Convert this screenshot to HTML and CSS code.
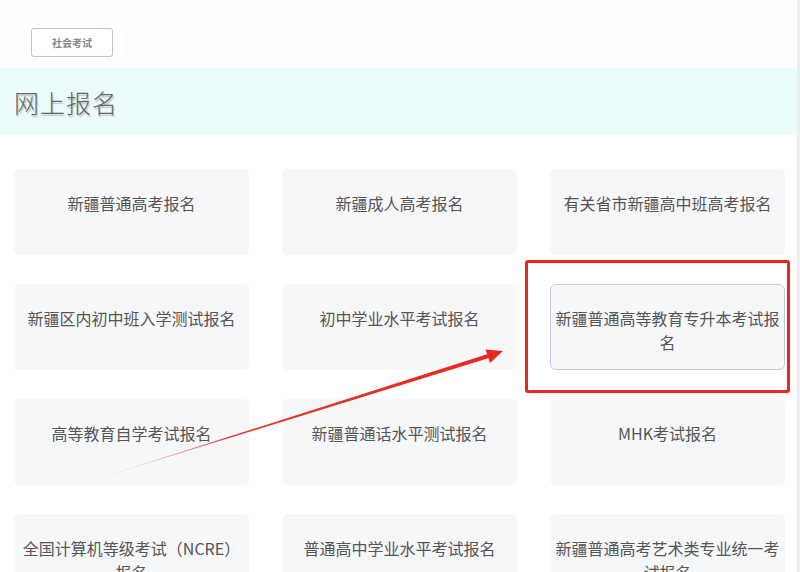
FILE: index.html
```html
<!DOCTYPE html>
<html lang="zh-CN">
<head>
    <meta charset="UTF-8">
    <meta name="viewport" content="width=device-width, initial-scale=1.0">
    <title>网上报名</title>
    <link rel="stylesheet" href="styles.css">
</head>
<body>
    <div class="page">
        <div class="top-bar">
            <button class="tab-btn">社会考试</button>
        </div>

        <div class="title-band">
            <h1 class="title">网上报名</h1>
        </div>

        <div class="exam-grid">
            <div class="exam-card">新疆普通高考报名</div>
            <div class="exam-card">新疆成人高考报名</div>
            <div class="exam-card">有关省市新疆高中班高考报名</div>
            <div class="exam-card">新疆区内初中班入学测试报名</div>
            <div class="exam-card">初中学业水平考试报名</div>
            <div class="exam-card active">新疆普通高等教育专升本考试报名</div>
            <div class="exam-card">高等教育自学考试报名</div>
            <div class="exam-card">新疆普通话水平测试报名</div>
            <div class="exam-card">MHK考试报名</div>
            <div class="exam-card">全国计算机等级考试（NCRE）报名</div>
            <div class="exam-card">普通高中学业水平考试报名</div>
            <div class="exam-card">新疆普通高考艺术类专业统一考试报名</div>
        </div>

        <!-- annotation drawn over the page -->
        <div class="mark-box"></div>
        <svg class="mark-arrow" width="800" height="572" viewBox="0 0 800 572">
            <defs>
                <linearGradient id="shaft" x1="90" y1="481" x2="490" y2="355" gradientUnits="userSpaceOnUse">
                    <stop offset="0" stop-color="#f4c8c8" stop-opacity="0.3"/>
                    <stop offset="0.35" stop-color="#e23a30"/>
                    <stop offset="1" stop-color="#e8281e"/>
                </linearGradient>
            </defs>
            <polygon points="90,481 489.4,353.6 490.6,357.4" fill="url(#shaft)"/>
            <polygon points="503,351 485.5,349.5 490,363" fill="#e8281e"/>
        </svg>
    </div>
</body>
</html>
```

FILE: styles.css
```css
body {
    margin: 0;
    padding: 0;
    background-color: #fff;
    font-family: "Noto Sans CJK SC", "Noto Sans", sans-serif;
    overflow: hidden;
}

.page {
    position: relative;
    width: 797px;
    height: 572px;
    border-right: 3px solid #eeeeee;
    overflow: hidden;
}

.top-bar {
    height: 68px;
    padding: 28px 0 0 31px;
    box-sizing: border-box;
    background-color: #fefefe;
}

.tab-btn {
    width: 82px;
    height: 29px;
    background-color: #fff;
    border: 1px solid #b9c6d8;
    border-radius: 3px;
    font-family: "Noto Sans CJK SC", sans-serif;
    font-size: 10px;
    font-weight: bold;
    color: #888;
    padding: 0;
}

.title-band {
    height: 67px;
    background-color: #ebfcfd;
    display: flex;
    align-items: center;
    padding-left: 14px;
}

.title {
    margin: 0;
    font-size: 25px;
    font-weight: 300;
    color: #666;
    letter-spacing: 1px;
    text-shadow: 1px 2px 1px #c4c4c4;
}

.exam-grid {
    display: grid;
    grid-template-columns: repeat(3, 235px);
    column-gap: 33px;
    row-gap: 29px;
    padding: 34px 0 0 14px;
}

.exam-card {
    height: 86px;
    box-sizing: border-box;
    padding: 22px 4px 0;
    background-color: #f6f7f9;
    border-radius: 6px;
    text-align: center;
    font-size: 16px;
    line-height: 24px;
    color: #555;
}

.exam-card.active {
    border: 1px solid #c6c8e2;
    padding-top: 21px;
}

.mark-box {
    position: absolute;
    left: 525px;
    top: 260px;
    width: 259px;
    height: 127px;
    border: 3px solid #e8281e;
    border-radius: 3px;
}

.mark-arrow {
    position: absolute;
    left: 0;
    top: 0;
    pointer-events: none;
}
```
